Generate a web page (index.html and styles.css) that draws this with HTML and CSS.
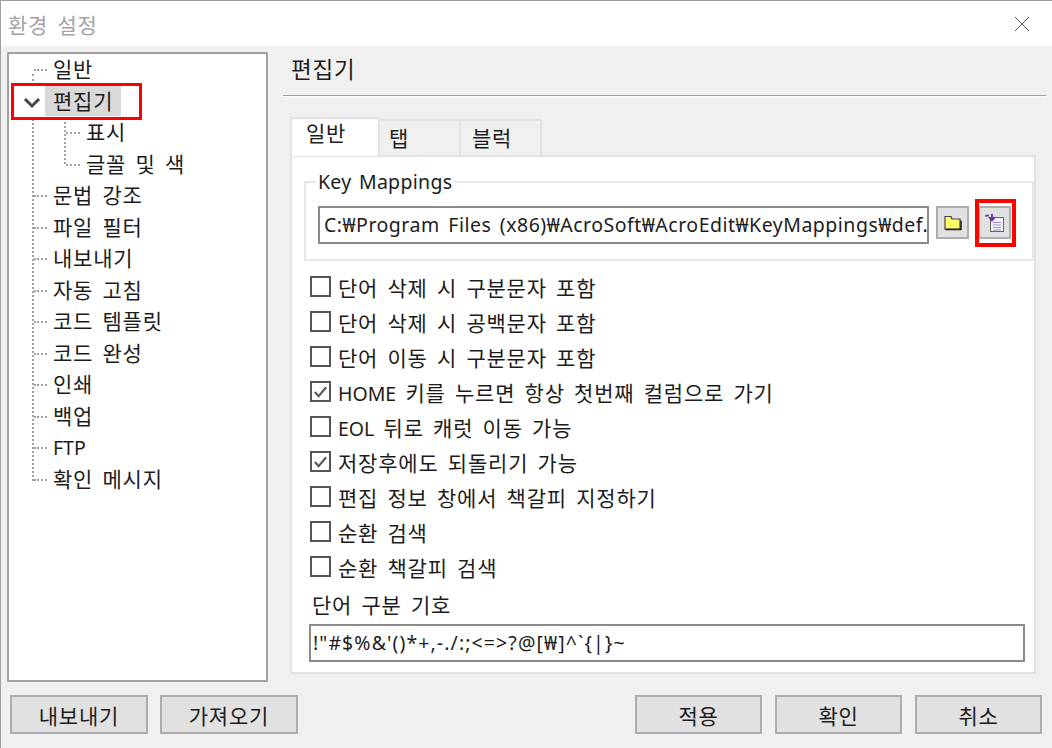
FILE: index.html
```html
<!DOCTYPE html>
<html lang="ko">
<head>
<meta charset="utf-8">
<title>환경 설정</title>
<link rel="stylesheet" href="styles.css">
</head>
<body>
<div class="window">
  <header class="titlebar">
    <span class="title">환경 설정</span>
    <svg class="close" width="16" height="16" viewBox="0 0 16 16"><path d="M1 1L15 15M15 1L1 15" stroke="#555" stroke-width="1" fill="none"/></svg>
  </header>
  <div class="content">
    <nav class="tree">
      <div class="row"><span class="node">일반</span></div>
      <div class="row open">
        <svg class="chevron" width="18" height="34" viewBox="0 0 18 34"><path d="M2 13L9 20L16 13" stroke="#444" stroke-width="3" fill="none"/></svg>
        <span class="node selected">편집기</span>
      </div>
      <div class="children">
        <div class="row child"><span class="node">표시</span></div>
        <div class="row child"><span class="node">글꼴 및 색</span></div>
      </div>
      <div class="row"><span class="node">문법 강조</span></div>
      <div class="row"><span class="node">파일 필터</span></div>
      <div class="row"><span class="node">내보내기</span></div>
      <div class="row"><span class="node">자동 고침</span></div>
      <div class="row"><span class="node">코드 템플릿</span></div>
      <div class="row"><span class="node">코드 완성</span></div>
      <div class="row"><span class="node">인쇄</span></div>
      <div class="row"><span class="node">백업</span></div>
      <div class="row"><span class="node latin">FTP</span></div>
      <div class="row last"><span class="node">확인 메시지</span></div>
    </nav>
    <main class="pane">
      <h1 class="pane-title">편집기</h1>
      <div class="tabs">
        <div class="tab active">일반</div>
        <div class="tab">탭</div>
        <div class="tab">블럭</div>
      </div>
      <section class="tab-panel">
        <fieldset class="group">
          <legend>Key Mappings</legend>
          <div class="path-row">
            <div class="field path">C:₩Program Files (x86)₩AcroSoft₩AcroEdit₩KeyMappings₩def.</div>
            <button class="icon-btn">
              <svg width="20" height="20" viewBox="0 0 20 20"><path d="M2 6V3.500H8L9 6H17V16H2Z" fill="#ffff66" stroke="#444" stroke-width="1.200"/><path d="M2.500 16.500H18V7.500" stroke="#222" stroke-width="1.600" fill="none"/></svg>
            </button>
            <button class="icon-btn">
              <svg width="20" height="20" viewBox="0 0 20 20"><rect x="5.500" y="4.500" width="13" height="14" fill="#f4f2fa" stroke="#666" stroke-width="1"/><path d="M8 9.500H16M8 12H16M8 14.500H16M8 17H16" stroke="#9a8fd0" stroke-width="1"/><path d="M0.500 3.500Q2 1.500 3.500 3M7 1V7M4 4L7 7.500L10 4" stroke="#6a35a8" stroke-width="1.800" fill="none"/></svg>
            </button>
          </div>
        </fieldset>
        <ul class="options">
          <li class="option"><span class="box"></span>단어 삭제 시 구분문자 포함</li>
          <li class="option"><span class="box"></span>단어 삭제 시 공백문자 포함</li>
          <li class="option"><span class="box"></span>단어 이동 시 구분문자 포함</li>
          <li class="option"><span class="box"><svg width="18" height="18" viewBox="0 0 18 18"><path d="M3 9L7 13.500L15 4" stroke="#555" stroke-width="2.200" fill="none"/></svg></span><span><span class="latin">HOME</span> 키를 누르면 항상 첫번째 컬럼으로 가기</span></li>
          <li class="option"><span class="box"></span><span><span class="latin">EOL</span> 뒤로 캐럿 이동 가능</span></li>
          <li class="option"><span class="box"><svg width="18" height="18" viewBox="0 0 18 18"><path d="M3 9L7 13.500L15 4" stroke="#555" stroke-width="2.200" fill="none"/></svg></span>저장후에도 되돌리기 가능</li>
          <li class="option"><span class="box"></span>편집 정보 창에서 책갈피 지정하기</li>
          <li class="option"><span class="box"></span>순환 검색</li>
          <li class="option"><span class="box"></span>순환 책갈피 검색</li>
        </ul>
        <div class="sep-label">단어 구분 기호</div>
        <div class="field separators">!"#$%&amp;'()*+,-./:;&lt;=&gt;?@[₩]^`{|}~</div>
      </section>
    </main>
  </div>
  <footer class="footer">
    <div class="btn-group">
      <button class="btn wide">내보내기</button>
      <button class="btn wide">가져오기</button>
    </div>
    <div class="btn-group right">
      <button class="btn">적용</button>
      <button class="btn">확인</button>
      <button class="btn">취소</button>
    </div>
  </footer>
</div>
<div class="mark mark-tree"></div>
<div class="mark mark-icon"></div>
</body>
</html>
```
FILE: styles.css
```css
* { box-sizing: border-box; }
html, body { margin: 0; padding: 0; }
body {
  width: 1052px;
  height: 748px;
  overflow: hidden;
  position: relative;
  font-family: "Noto Sans", "Noto Sans CJK KR", sans-serif;
  font-size: 21px;
  letter-spacing: .8px;
  word-spacing: 3px;
  color: #1c1c1c;
  background: #f0f0f0;
}
.latin { font-size: 19.500px; letter-spacing: 0; }
.window {
  width: 1052px;
  height: 748px;
  border-top: 1px solid #a0a0a0;
  border-left: 1px solid #a0a0a0;
  display: flex;
  flex-direction: column;
}
.titlebar {
  height: 45px;
  background: #fff;
  display: flex;
  align-items: center;
  justify-content: space-between;
  padding: 0 22px 0 7px;
  flex: none;
}
.title { color: #a3a3a3; font-size: 21px; }
.content {
  height: 635px;
  flex: none;
  display: flex;
  padding: 6px 16px 0 6px;
  gap: 22px;
}
.tree {
  width: 261px;
  height: 630px;
  background: #fff;
  border: 2px solid #a0a0a0;
  border-radius: 1px;
  position: relative;
  flex: none;
}
.tree::before {
  content: "";
  position: absolute;
  left: 23px;
  top: 20px;
  height: 407px;
  border-left: 2px dotted #a0a0a0;
}
.row {
  height: 31.500px;
  display: flex;
  align-items: center;
  padding-left: 38px;
  position: relative;
  line-height: 1;
}
.row::before {
  content: "";
  position: absolute;
  left: 25px;
  top: 15px;
  width: 13px;
  border-top: 2px dotted #a0a0a0;
}
.row.open::before { display: none; }
.row .node { padding: 0 6px; }
.row .node.selected {
  background: #d9d9d9;
  height: 30px;
  display: flex;
  align-items: center;
  width: 76px;
  margin-left: -2px;
  padding: 0 0 0 8px;
}
.chevron {
  position: absolute;
  left: 13px;
  top: 0;
  background: #fff;
  width: 20px;
}
.children { position: relative; }
.children::before {
  content: "";
  position: absolute;
  left: 55px;
  top: 0;
  height: 47px;
  border-left: 2px dotted #a0a0a0;
}
.row.child { padding-left: 71px; }
.row.child::before { left: 57px; width: 14px; }
.pane { flex: 1; display: flex; flex-direction: column; min-width: 0; }
.pane-title {
  margin: 0 -10px 0 -7px;
  font-size: 22.500px;
  font-weight: 400;
  height: 44px;
  line-height: 35px;
  padding-left: 8px;
  border-bottom: 1px solid #a0a0a0;
  box-shadow: 0 1px 0 #fff;
  flex: none;
}
.tabs {
  display: flex;
  align-items: flex-end;
  height: 39px;
  margin-top: 20px;
  flex: none;
  position: relative;
  z-index: 1;
}
.tab {
  width: 81px;
  height: 36px;
  background: #f0f0f0;
  border: 2px solid #e2e2e2;
  border-left-width: 0;
  border-bottom: 0;
  padding-left: 29px;
  line-height: 35px;
}
.tab.active {
  width: 90px;
  height: 39px;
  background: #fff;
  border-left-width: 2px;
  padding-left: 14px;
  margin-bottom: -1px;
  line-height: 29px;
}
.tab:nth-child(2) { padding-left: 9px; }
.tab:nth-child(3) { padding-left: 11px; }
.tab-panel {
  width: 746px;
  height: 519px;
  background: #fff;
  border: 2px solid #e2e2e2;
  padding: 14px 6px 0 12px;
  flex: none;
}
.group {
  margin: 0;
  height: 90px;
  padding: 0 12px;
  border: 2px solid #e6e6e6;
  width: 723px;
  display: block;
}
.group legend {
  padding: 0 2px;
  margin-left: -2px;
  line-height: 22px;
  font-size: 19.500px;
  word-spacing: 2px;
  letter-spacing: .3px;
}
.path-row { display: flex; align-items: flex-start; margin-top: 13px; }
.field {
  background: #fff;
  border: 2px solid #8a8a8a;
  white-space: nowrap;
  overflow: hidden;
}
.path {
  width: 611px;
  height: 38px;
  line-height: 33px;
  padding-left: 4px;
  font-size: 19.500px;
  word-spacing: 3px;
  letter-spacing: .5px;
  margin-right: 7px;
}
.icon-btn {
  width: 33px;
  height: 33px;
  background: #e1e1e1;
  border: 2px solid #adadad;
  padding: 0;
  margin-right: 9px;
  display: flex;
  align-items: center;
  justify-content: center;
}
.options {
  list-style: none;
  margin: 8px 0 0;
  padding: 0 0 0 6px;
}
.option {
  height: 35px;
  display: flex;
  align-items: center;
}
.box {
  width: 21px;
  height: 21px;
  border: 2px solid #555;
  background: #fff;
  margin-right: 7px;
  display: flex;
  align-items: center;
  justify-content: center;
  flex: none;
}
.sep-label {
  margin: 2px 0 0 8px;
  height: 38px;
  line-height: 38px;
}
.separators {
  margin-left: 5px;
  width: 716px;
  height: 38px;
  line-height: 34px;
  padding-left: 2px;
  font-size: 19.500px;
  letter-spacing: 1.100px;
}
.footer {
  flex: 1;
  display: flex;
  justify-content: space-between;
  padding: 14px 10px 0 9px;
}
.btn-group { display: flex; gap: 12px; }
.btn-group.right { gap: 13px; }
.btn {
  width: 127px;
  height: 39px;
  background: #e1e1e1;
  border: 2px solid #adadad;
  font: inherit;
  letter-spacing: inherit;
  word-spacing: inherit;
  color: inherit;
  padding: 0;
}
.btn.wide { width: 138px; }
.mark {
  position: absolute;
  border: 3px solid #f00;
  pointer-events: none;
}
.mark-tree { left: 11px; top: 83px; width: 131px; height: 37px; }
.mark-icon { left: 975px; top: 199px; width: 41px; height: 48px; border-width: 4px; }
```
